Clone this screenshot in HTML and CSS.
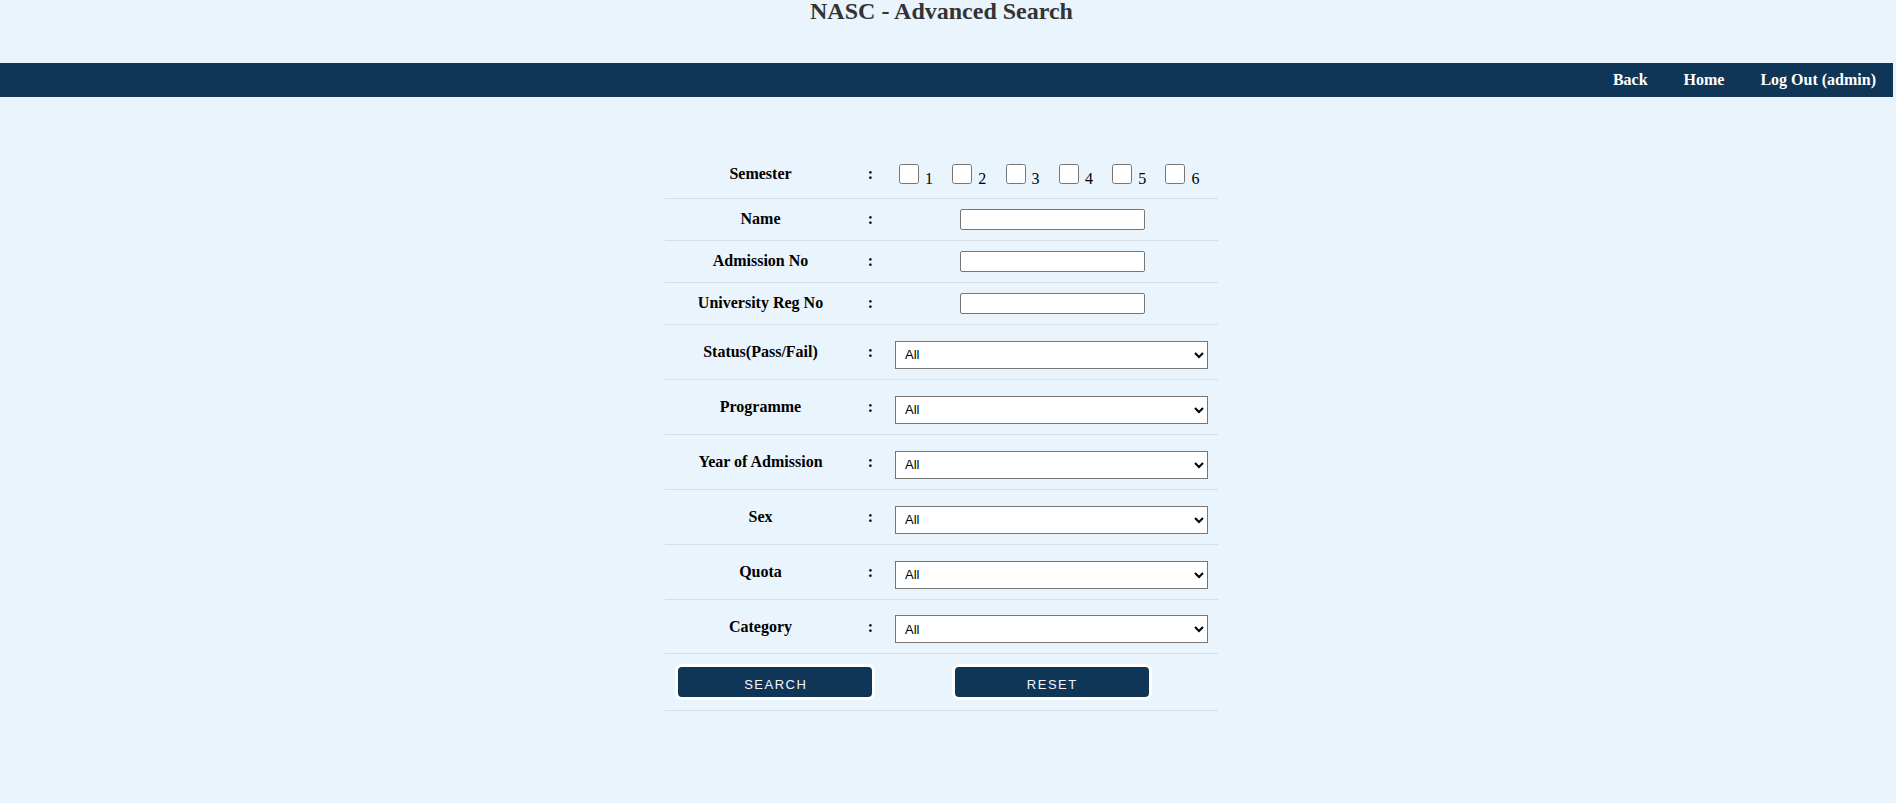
FILE: index.html
```html
<!DOCTYPE html>
<html>
<head>
<meta charset="utf-8">
<title>NASC - Advanced Search</title>
<link rel="stylesheet" href="styles.css">
</head>
<body>
<h1 class="title">NASC - Advanced Search</h1>
<nav class="topnav">
  <a href="#" class="navlink">Back</a>
  <a href="#" class="navlink">Home</a>
  <a href="#" class="navlink">Log Out (admin)</a>
</nav>
<div class="wrap">
  <form class="search">
    <div class="row row-check">
      <div class="lbl">Semester</div>
      <div class="colon">:</div>
      <div class="field checks">
        <label class="chk"><input type="checkbox" class="cb"><span class="num">1</span></label>
        <label class="chk"><input type="checkbox" class="cb"><span class="num">2</span></label>
        <label class="chk"><input type="checkbox" class="cb"><span class="num">3</span></label>
        <label class="chk"><input type="checkbox" class="cb"><span class="num">4</span></label>
        <label class="chk"><input type="checkbox" class="cb"><span class="num">5</span></label>
        <label class="chk"><input type="checkbox" class="cb"><span class="num">6</span></label>
      </div>
    </div>
    <div class="row row-text">
      <div class="lbl">Name</div>
      <div class="colon">:</div>
      <div class="field"><input type="text" class="txt"></div>
    </div>
    <div class="row row-text">
      <div class="lbl">Admission No</div>
      <div class="colon">:</div>
      <div class="field"><input type="text" class="txt"></div>
    </div>
    <div class="row row-text">
      <div class="lbl">University Reg No</div>
      <div class="colon">:</div>
      <div class="field"><input type="text" class="txt"></div>
    </div>
    <div class="row row-select">
      <div class="lbl">Status(Pass/Fail)</div>
      <div class="colon">:</div>
      <div class="field"><select class="sel"><option>All</option></select></div>
    </div>
    <div class="row row-select">
      <div class="lbl">Programme</div>
      <div class="colon">:</div>
      <div class="field"><select class="sel"><option>All</option></select></div>
    </div>
    <div class="row row-select">
      <div class="lbl">Year of Admission</div>
      <div class="colon">:</div>
      <div class="field"><select class="sel"><option>All</option></select></div>
    </div>
    <div class="row row-select">
      <div class="lbl">Sex</div>
      <div class="colon">:</div>
      <div class="field"><select class="sel"><option>All</option></select></div>
    </div>
    <div class="row row-select">
      <div class="lbl">Quota</div>
      <div class="colon">:</div>
      <div class="field"><select class="sel"><option>All</option></select></div>
    </div>
    <div class="row row-select row-last">
      <div class="lbl">Category</div>
      <div class="colon">:</div>
      <div class="field"><select class="sel"><option>All</option></select></div>
    </div>
    <div class="row row-btn">
      <div class="field"><button type="button" class="btn">SEARCH</button></div>
      <div class="field"><button type="reset" class="btn">RESET</button></div>
    </div>
  </form>
</div>
</body>
</html>
```
FILE: styles.css
```css
html, body {
  margin: 0;
  padding: 0;
}
body {
  background: #e9f4fd;
  font-family: "Liberation Serif", "Times New Roman", serif;
  color: #000;
}
.title {
  width: 1883px;
  margin: 0 0 41px 0;
  font-size: 24px;
  line-height: 22px;
  font-weight: bold;
  text-align: center;
  color: #333;
}
.topnav {
  width: 1893px;
  height: 34px;
  box-sizing: border-box;
  background: #0f3557;
  display: flex;
  justify-content: flex-end;
  align-items: center;
  gap: 36px;
  padding-right: 17px;
}
.navlink {
  color: #fff;
  text-decoration: none;
  font-weight: bold;
  font-size: 16px;
  line-height: 34px;
}
.wrap {
  width: 1883px;
  padding-top: 58px;
}
.search {
  width: 553px;
  margin: 0 auto;
}
.row {
  display: grid;
  grid-template-columns: 191px 29px 333px;
  align-items: center;
  box-sizing: border-box;
  border-bottom: 1px solid #d6dde3;
}
.row-check {
  height: 44px;
  padding-bottom: 4px;
}
.row-text {
  height: 42px;
}
.row-select {
  height: 55px;
}
.row-last {
  height: 54px;
}
.row-btn {
  height: 57px;
  grid-template-columns: 220px 333px;
}
.lbl {
  text-align: center;
  font-weight: bold;
  font-size: 16px;
  line-height: 18px;
}
.colon {
  text-align: center;
  font-weight: bold;
  font-size: 16px;
  line-height: 18px;
}
.row-text .lbl,
.row-text .colon,
.row-check .lbl,
.row-check .colon {
  margin-bottom: 2px;
}
.field {
  display: flex;
  justify-content: center;
  align-items: center;
}
.checks {
  justify-content: flex-start;
  padding-left: 14px;
  align-items: flex-end;
  margin-bottom: 2px;
}
.chk {
  display: inline-flex;
  align-items: flex-end;
  margin-right: 19.3px;
}
.cb {
  width: 20px;
  height: 20px;
  margin: 0 6px 0 0;
}
.num {
  font-size: 16px;
  line-height: 11px;
  width: 8px;
}
.txt {
  width: 185px;
  height: 21px;
  margin-left: 2px;
  box-sizing: border-box;
  border: 1px solid #767676;
  border-radius: 2px;
  background: #fff;
  padding: 1px 2px;
}
.sel {
  width: 313px;
  height: 28px;
  margin-top: 5px;
  box-sizing: border-box;
  border: 1px solid #767676;
  border-radius: 0;
  background-color: #fff;
  font-family: "Liberation Sans", Arial, sans-serif;
  font-size: 13px;
  padding-left: 5px;
  color: #000;
}
.btn {
  width: 200px;
  height: 36px;
  box-sizing: border-box;
  background: #0f3557;
  border: 3px solid #fff;
  border-radius: 7px;
  color: #f2f6fa;
  font-family: "Liberation Sans", Arial, sans-serif;
  font-size: 13px;
  letter-spacing: 1.5px;
  padding: 4px 0 0 1.5px;
  cursor: pointer;
}
```
